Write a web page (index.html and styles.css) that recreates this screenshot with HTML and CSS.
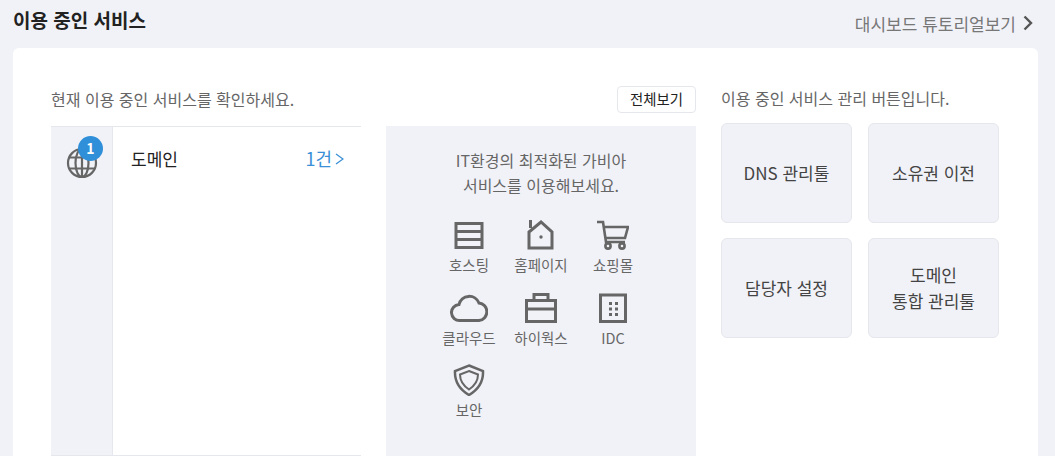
FILE: index.html
```html
<!DOCTYPE html>
<html lang="ko">

<head>
    <meta charset="UTF-8">
    <meta name="viewport" content="width=device-width, initial-scale=1.0">
    <title>이용 중인 서비스</title>
    <link rel="stylesheet" href="styles.css">
</head>

<body>
    <section class="dashboard">
        <div class="dash-head">
            <h2>이용 중인 서비스</h2>
            <a class="tutorial" href="#">대시보드 튜토리얼보기
                <svg width="10" height="16" viewBox="0 0 10 16"><path d="M1.500 1.500 8 8l-6.500 6.500" fill="none" stroke="#555" stroke-width="2.400"/></svg>
            </a>
        </div>

        <div class="card">
            <div class="col-services">
                <div class="col-head">
                    <p>현재 이용 중인 서비스를 확인하세요.</p>
                    <button class="btn-all">전체보기</button>
                </div>
                <div class="col-body">
                    <div class="service-table">
                        <div class="service-icon">
                            <svg width="32" height="32" viewBox="0 0 32 32" fill="none" stroke="#666" stroke-width="2.200">
                                <circle cx="16" cy="16" r="14"/>
                                <ellipse cx="16" cy="16" rx="6.500" ry="14"/>
                                <path d="M16 2v28M3.500 10.500h25M3.500 21.500h25"/>
                            </svg>
                            <span class="badge">1</span>
                        </div>
                        <div class="service-row">
                            <span class="service-name">도메인</span>
                            <a class="service-count" href="#">1건
                                <svg width="9" height="12" viewBox="0 0 9 12"><path d="M1 1l7 5-7 5" fill="none" stroke="#3a8fd6" stroke-width="1.300"/></svg>
                            </a>
                        </div>
                    </div>

                    <div class="promo">
                        <p>IT환경의 최적화된 가비아<br>서비스를 이용해보세요.</p>
                        <ul class="promo-list">
                            <li>
                                <svg width="32" height="32" viewBox="0 0 32 32" fill="none" stroke="#666" stroke-width="3">
                                    <path d="M3 4.500h26v24H3zM3 12.500h26M3 20.500h26"/>
                                </svg>
                                <span>호스팅</span>
                            </li>
                            <li>
                                <svg width="32" height="32" viewBox="0 0 32 32" fill="none" stroke="#666" stroke-width="3">
                                    <path d="M5.500 1v8M4 13 16 3l11 10v16H4z"/>
                                    <circle cx="16" cy="18" r="1.700" fill="#666" stroke="none"/>
                                </svg>
                                <span>홈페이지</span>
                            </li>
                            <li>
                                <svg width="32" height="32" viewBox="0 0 32 32" fill="none" stroke="#666" stroke-width="2.600">
                                    <path d="M0 3h6l3 20h19M7 8h24l-3 11H9"/>
                                    <circle cx="11" cy="27" r="2.600"/>
                                    <circle cx="25" cy="27" r="2.600"/>
                                </svg>
                                <span>쇼핑몰</span>
                            </li>
                            <li>
                                <svg width="38" height="32" viewBox="0 0 38 32" fill="none" stroke="#666" stroke-width="3">
                                    <path d="M10 28.500a8 8 0 0 1-1-16 10.500 10.500 0 0 1 20-1.500 8.800 8.800 0 0 1 0 17.500z"/>
                                </svg>
                                <span>클라우드</span>
                            </li>
                            <li>
                                <svg width="32" height="32" viewBox="0 0 32 32" fill="none" stroke="#666" stroke-width="3">
                                    <path d="M1.500 8.500h29v21h-29zM9 8.500v-6h14v6M1.500 17h29"/>
                                </svg>
                                <span>하이웍스</span>
                            </li>
                            <li>
                                <svg width="28" height="30" viewBox="0 0 28 30" fill="none" stroke="#666" stroke-width="3">
                                    <path d="M1.500 2h25v26.500h-25z"/>
                                    <path d="M10 9h3v3h-3zM16 9h3v3h-3zM10 14.500h3v3h-3zM16 14.500h3v3h-3zM10 20h3v3h-3zM16 20h3v3h-3z" fill="#666" stroke="none"/>
                                </svg>
                                <span>IDC</span>
                            </li>
                            <li>
                                <svg width="32" height="32" viewBox="0 0 32 32" fill="none" stroke="#666">
                                    <path d="M16 1.500 30 7c.5 10-4 18-14 24C6 25 1.500 17 2 7z" stroke-width="2.500"/>
                                    <path d="M16 7l9 3.500c0 6-3 11-9 15-6-4-9-9-9-15z" stroke-width="2"/>
                                </svg>
                                <span>보안</span>
                            </li>
                        </ul>
                    </div>
                </div>
            </div>

            <div class="col-manage">
                <p>이용 중인 서비스 관리 버튼입니다.</p>
                <div class="manage-grid">
                    <a class="manage-btn" href="#">DNS 관리툴</a>
                    <a class="manage-btn" href="#">소유권 이전</a>
                    <a class="manage-btn" href="#">담당자 설정</a>
                    <a class="manage-btn" href="#">도메인<br>통합 관리툴</a>
                </div>
            </div>
        </div>
    </section>
</body>

</html>
```

FILE: styles.css
```css
* {
    box-sizing: border-box;
    margin: 0;
    padding: 0;
}

html,
body {
    height: 100%;
    overflow: hidden;
}

body {
    background-color: #f1f2f7;
    font-family: "Noto Sans CJK KR", "Noto Sans", sans-serif;
    color: #333;
}

a {
    text-decoration: none;
    color: inherit;
}

.dashboard {
    padding: 0 17px 0 13px;
}

.dash-head {
    display: flex;
    justify-content: space-between;
    align-items: center;
    height: 48px;
}

.dash-head h2 {
    font-size: 19px;
    font-weight: 700;
    color: #222;
    margin-top: -9px;
}

.tutorial {
    display: flex;
    align-items: center;
    gap: 7px;
    font-size: 17px;
    color: #777;
    padding-right: 5px;
    margin-top: -2px;
}

.card {
    display: flex;
    height: 420px;
    background-color: #fff;
    border-radius: 6px;
    padding: 37px 0 0 38px;
}

.col-services {
    width: 645px;
    margin-right: 25px;
}

.col-head {
    display: flex;
    justify-content: space-between;
    align-items: center;
    height: 41px;
    padding: 1px 0 13px;
}

.col-head p {
    margin-top: -2px;
}

.col-head p,
.col-manage p {
    font-size: 16px;
    color: #666;
}

.btn-all {
    width: 79px;
    height: 27px;
    background-color: #fff;
    border: 1px solid #e6e7ed;
    border-radius: 4px;
    font-family: inherit;
    font-size: 14.400px;
    color: #222;
    padding-bottom: 2px;
}

.col-body {
    display: flex;
    gap: 25px;
}

.service-table {
    display: flex;
    width: 310px;
    height: 330px;
    border-top: 1px solid #e6e7ed;
    border-bottom: 1px solid #e6e7ed;
}

.service-icon {
    position: relative;
    width: 62px;
    background-color: #f1f2f7;
    border-right: 1px solid #e6e7ed;
    padding: 20px 0 0 15px;
}

.badge {
    position: absolute;
    top: 9px;
    left: 27px;
    width: 25px;
    height: 25px;
    border-radius: 50%;
    background-color: #2f8fd8;
    color: #fff;
    font-size: 14px;
    font-weight: 700;
    line-height: 24px;
    text-align: center;
}

.service-row {
    flex: 1;
    display: flex;
    justify-content: space-between;
    align-items: flex-start;
    padding: 19px 17px 0 18px;
}

.service-name {
    font-size: 17px;
    color: #222;
}

.service-count {
    display: flex;
    align-items: center;
    gap: 3px;
    font-size: 18px;
    line-height: 25px;
    color: #3a8fd6;
}

.promo {
    width: 310px;
    height: 330px;
    background-color: #f1f2f7;
    padding-top: 22px;
}

.promo p {
    font-size: 16px;
    line-height: 25px;
    color: #666;
    text-align: center;
}

.promo-list {
    list-style: none;
    display: grid;
    grid-template-columns: repeat(3, 72px);
    grid-auto-rows: 72.500px;
    padding: 21px 0 0 47px;
}

.promo-list li {
    display: flex;
    flex-direction: column;
    align-items: center;
}

.promo-list svg {
    height: 32px;
}

.promo-list span {
    font-size: 14.500px;
    line-height: 20px;
    margin-top: 4px;
    color: #666;
    white-space: nowrap;
}

.col-manage p {
    height: 38px;
    padding-top: 1px;
}

.manage-grid {
    display: grid;
    grid-template-columns: repeat(2, 131px);
    grid-auto-rows: 100px;
    gap: 15px 16px;
}

.manage-btn {
    display: flex;
    align-items: center;
    justify-content: center;
    text-align: center;
    background-color: #f1f2f7;
    border: 1px solid #e6e7ed;
    border-radius: 6px;
    font-size: 17px;
    line-height: 26px;
    color: #444;
}
```
